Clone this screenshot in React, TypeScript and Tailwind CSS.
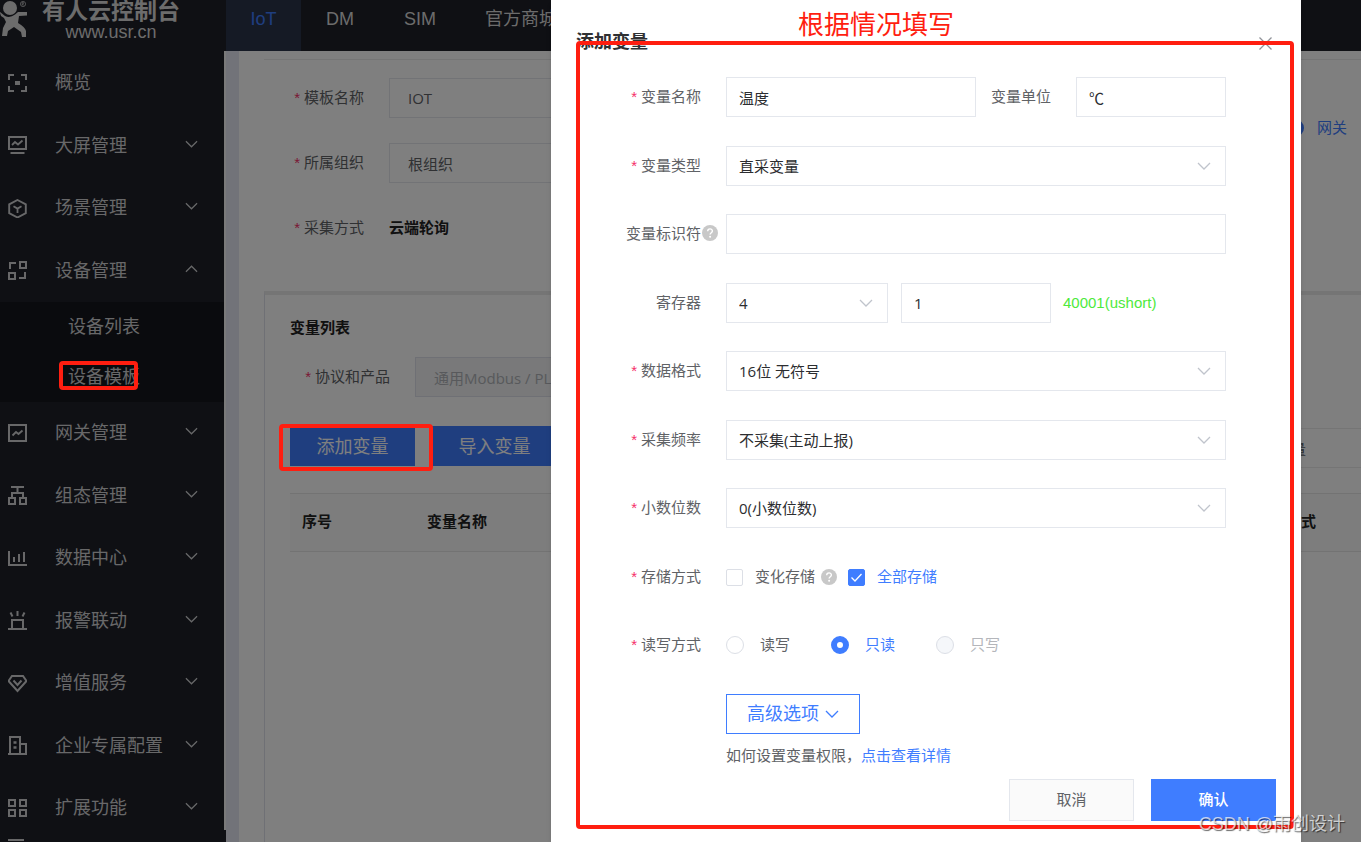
import React, { useState } from 'react';

interface MenuItem {
  label: string;
  icon: React.ReactNode;
  children?: string[];
  leaf?: boolean;
}

// Sidebar icons, all drawn on the same 19x19 grid
const menuItems: MenuItem[] = [
  {
    label: '概览',
    leaf: true,
    icon: (
      <>
        <path d="M1 6V1h5M13 1h5v5M18 12v5h-5M6 17H1v-5" />
        <rect x="7" y="7" width="5" height="4" fill="currentColor" stroke="none" />
      </>
    ),
  },
  {
    label: '大屏管理',
    icon: (
      <>
        <rect x="1" y="1" width="17" height="12" />
        <path d="M4 9l3-3 3 2.500 4.500-4" strokeWidth="1.8" />
        <path d="M2.500 17h14" />
      </>
    ),
  },
  {
    label: '场景管理',
    icon: (
      <>
        <path d="M9.500 1l8.300 4.300v8.900L9.500 18.500l-8.300-4.300V5.300z" strokeWidth="1.9" />
        <path d="M5.500 7.300l4 2.300 4-2.300M9.500 9.500v4.500" strokeWidth="1.8" />
      </>
    ),
  },
  {
    label: '设备管理',
    icon: (
      <>
        <path d="M2 8V2h6" />
        <rect x="12" y="1" width="6" height="6" />
        <rect x="1" y="12" width="6" height="6" />
        <path d="M17 11v6h-6" />
      </>
    ),
    children: ['设备列表', '设备模板'],
  },
  {
    label: '网关管理',
    icon: (
      <>
        <rect x="1" y="1" width="17" height="16" />
        <path d="M4.500 11.500l3.500-3.500 2.500 2 4-3.500" strokeWidth="1.8" />
      </>
    ),
  },
  {
    label: '组态管理',
    icon: (
      <>
        <path d="M3 1h13M9.500 1v6M4 11V7h11v4" />
        <rect x="1" y="12" width="6" height="6" />
        <rect x="12" y="12" width="6" height="6" />
      </>
    ),
  },
  {
    label: '数据中心',
    icon: (
      <>
        <path d="M1 2v14h18" />
        <path d="M6 13V8M11 13V5M16 13V3" />
      </>
    ),
  },
  {
    label: '报警联动',
    icon: (
      <>
        <path d="M4 17V9h11v8M0 18h19" />
        <path d="M9.500 0v5M2.500 1.500l2 4M16.500 1.500l-2 4" />
      </>
    ),
  },
  {
    label: '增值服务',
    icon: (
      <>
        <path d="M4 2h11l3.500 5-9 10-9-10z" />
        <path d="M5.500 6.500l4 4.500 4-4.500" />
      </>
    ),
  },
  {
    label: '企业专属配置',
    icon: (
      <>
        <path d="M2 18V1h10v17M12 8h6v10M0 18h19" />
        <path d="M5.500 6.500h3M5.500 11.500h3" strokeWidth="2.500" />
      </>
    ),
  },
  {
    label: '扩展功能',
    icon: (
      <>
        <rect x="1" y="1" width="6" height="6" />
        <rect x="12" y="1" width="6" height="6" />
        <rect x="1" y="11" width="6" height="6" />
        <rect x="12" y="11" width="6" height="6" />
      </>
    ),
  },
];

const Chevron: React.FC<{ className?: string; width?: number }> = ({ className = '', width = 14 }) => (
  <svg className={`shrink-0 ${className}`} width={width} height="8" viewBox="0 0 14 8" fill="none" stroke="currentColor" strokeWidth="1.3">
    <path d="M1 1l6 6 6-6" />
  </svg>
);

const HelpIcon: React.FC = () => (
  <svg width="16" height="16" viewBox="0 0 16 16" fill="none">
    <circle cx="8" cy="8" r="8" fill="#c8c8c8" />
    <path d="M5.700 6.200c0-3 4.700-3 4.700-.2 0 1.700-2.300 1.700-2.300 3.500" stroke="#fff" strokeWidth="1.400" />
    <circle cx="8.100" cy="11.800" r="1" fill="#fff" />
  </svg>
);

interface LabelProps {
  htmlFor?: string;
  required?: boolean;
  help?: boolean;
  className?: string;
  children: React.ReactNode;
}

const FieldLabel: React.FC<LabelProps> = ({ htmlFor, required, help, className = 'w-[150px]', children }) => (
  <label htmlFor={htmlFor} className={`relative shrink-0 pr-[25px] text-right text-[15px] text-[#606266] ${className}`}>
    {required && <span className="mr-1 text-[#f5306a]">*</span>}
    {children}
    {help && (
      <span className="absolute top-0.5 right-2">
        <HelpIcon />
      </span>
    )}
  </label>
);

const boxStyle =
  "h-10 w-full appearance-none border border-[#e4e7ed] bg-white px-3 text-[15px] text-[#2c2d30] outline-none font-['Open_Sans','Noto_Sans_CJK_SC',sans-serif]";

const SelectBox: React.FC<{ id: string; options: string[]; className?: string }> = ({ id, options, className = 'flex-1' }) => (
  <div className={`relative ${className}`}>
    <select id={id} className={boxStyle}>
      {options.map((option) => (
        <option key={option}>{option}</option>
      ))}
    </select>
    <Chevron className="pointer-events-none absolute top-4 right-[15px] text-[#c0c4cc]" />
  </div>
);

const Header: React.FC = () => (
  <header className="flex h-[51px] shrink-0 bg-[#1e2028] text-[#d8d8d8]">
    <div className="flex w-[226px] shrink-0">
      <svg className="shrink-0" width="42" height="40" viewBox="0 0 42 40" fill="currentColor">
        <ellipse cx="10" cy="8" rx="7" ry="7" />
        <path d="M0 12l5 4q5 2.500 10-1.500L18 12h9v3.500l-8 .5-1 7q7 4 8 8v6h-4l-1-5-7-5-6 4-1 5H2l1-8 3-6-2-4-3-2-1-3z" />
        <circle cx="23" cy="4" r="2.600" fill="none" stroke="currentColor" strokeWidth="0.700" />
        <path d="M22.200 5.500v-3h1.200v1.500h-1l1.400 1.500" fill="none" stroke="currentColor" strokeWidth="0.600" />
      </svg>
      <div className="flex flex-col items-center">
        <span className="text-[23px] leading-[22px] font-bold">有人云控制台</span>
        <span className="text-lg leading-5">www.usr.cn</span>
      </div>
    </div>
    <nav className="flex text-lg leading-[38px] whitespace-nowrap">
      <a href="#iot" className="w-[75px] bg-[#2a344a] text-center text-[#3f7dff]">IoT</a>
      <a href="#dm" className="px-[25px]">DM</a>
      <a href="#sim" className="px-[25px]">SIM</a>
      <a href="#mall" className="px-6">官方商城</a>
    </nav>
  </header>
);

const Sidebar: React.FC = () => (
  <aside className="flex w-[226px] shrink-0 flex-col bg-[#1e2028] text-lg text-[#d0d1d3]">
    <div className="min-h-0 flex-1 overflow-hidden border-r-2 border-[#f4f4f4] pt-px">
      <ul className="[&>li:nth-child(even)>a]:h-[63px] [&>li:nth-child(odd)>a]:h-[62px]">
        {menuItems.map((item) => (
          <li key={item.label}>
            <a href="#menu" className="flex items-center pr-[26px] pl-2">
              <svg className="mr-7 shrink-0" width="19" height="19" viewBox="0 0 19 19" fill="none" stroke="currentColor" strokeWidth="2">
                {item.icon}
              </svg>
              <span className="flex-1">{item.label}</span>
              {!item.leaf && <Chevron width={13} className={item.children ? 'mb-1 rotate-180' : 'mb-1'} />}
            </a>
            {item.children && (
              <ul className="bg-[#14161c] pl-[68px] leading-[50px]">
                {item.children.map((child) => (
                  <li key={child}>
                    <a href="#sub">{child}</a>
                  </li>
                ))}
              </ul>
            )}
          </li>
        ))}
      </ul>
    </div>
    <div className="flex h-3 shrink-0 items-end pb-px pl-2">
      <span className="h-0.5 w-4 bg-[#d0d1d3]" />
    </div>
  </aside>
);

const TemplatePage: React.FC = () => (
  <main className="flex min-w-0 flex-1 flex-col border-l-[13px] border-[#e4e6f2] bg-white pt-2 pl-[25px]">
    <section className="flex border-t border-[#ebebeb] pt-[18px] pb-[43px]">
      <div className="flex w-[600px] flex-col gap-[25px]">
        <div className="flex items-center">
          <FieldLabel htmlFor="tplName" required className="w-[125px]">模板名称</FieldLabel>
          <input id="tplName" className={`${boxStyle} pl-[18px] text-[#606266]`} defaultValue="IOT" />
        </div>
        <div className="flex items-center">
          <FieldLabel htmlFor="org" required className="w-[125px]">所属组织</FieldLabel>
          <input id="org" className={`${boxStyle} pl-[18px] text-[#606266]`} defaultValue="根组织" />
        </div>
        <div className="flex h-10 items-center">
          <FieldLabel required className="w-[125px]">采集方式</FieldLabel>
          <span className="text-[15px] font-bold text-[#222]">云端轮询</span>
        </div>
      </div>
      <label className="mt-[38px] mr-[14px] ml-auto flex h-6 items-center gap-[13px] text-[15px] text-[#3f7dff]">
        <input type="radio" name="deviceType" defaultChecked className="size-[18px] appearance-none rounded-full border-[6px] border-[#3f7dff] bg-white" />
        网关
      </label>
    </section>

    <section className="flex-1 border-t-4 border-l border-t-[#ebebeb] border-l-[#dfe1ea] pt-[21px] pl-[25px]">
      <h2 className="text-[15px] leading-6 font-bold text-[#222]">变量列表</h2>
      <div className="mt-[17px] flex items-center">
        <FieldLabel htmlFor="protocol" required className="w-[125px]">协议和产品</FieldLabel>
        <input
          id="protocol"
          disabled
          defaultValue="通用Modbus / PLC"
          className="h-10 w-[300px] border border-[#dfe1ea] bg-[#f2f2f4] px-[18px] font-['Open_Sans','Noto_Sans_CJK_SC',sans-serif] text-[15px] text-[#b0b2b8]"
        />
      </div>
      <div className="mt-[29px] flex items-start">
        <button type="button" className="mr-[17px] h-10 w-[125px] bg-[#3f7dff] pt-0.5 text-lg text-white">添加变量</button>
        <button type="button" className="h-10 w-[125px] bg-[#3f7dff] pt-0.5 text-lg text-white">导入变量</button>
        <input
          aria-label="搜索变量"
          defaultValue="搜索变量"
          className="mt-0.5 ml-auto h-10 w-[140px] border-y border-[#ebebeb] pr-[55px] text-right text-[15px] text-[#606266]"
        />
      </div>
      <table className="mt-[25px] w-full table-fixed text-left text-[15px] text-[#222]">
        <thead>
          <tr className="h-[58px] border-y border-[#e6e6e6] bg-[#fafafa]">
            <th className="w-[125px] pl-3">序号</th>
            <th className="pl-3">变量名称</th>
            <th className="pr-[45px] text-right">读写方式</th>
          </tr>
        </thead>
      </table>
    </section>
  </main>
);

interface StorageState {
  onChange: boolean;
  all: boolean;
}

const accessOptions = [
  { value: '读写', disabled: false },
  { value: '只读', disabled: false },
  { value: '只写', disabled: true },
];

const checkboxStyle =
  'size-[17px] appearance-none rounded-[2px] border border-[#dcdfe6] bg-white checked:border-[#3f7dff] checked:bg-[#3f7dff]';

const VariableDialog: React.FC = () => {
  const [storage, setStorage] = useState<StorageState>({ onChange: false, all: true });
  const [access, setAccess] = useState('只读');

  return (
    <form
      onSubmit={(e) => e.preventDefault()}
      className="relative min-h-full w-[750px] bg-white px-[25px] pt-[30px] text-[15px] text-[#606266] shadow-md"
    >
      <div className="mb-[23px] flex items-center justify-between">
        <h2 className="text-lg leading-6 font-bold text-[#303133]">添加变量</h2>
        <button type="button" aria-label="关闭" className="mt-0.5 mr-1 text-[#909399]">
          <svg width="13" height="13" viewBox="0 0 13 13" stroke="currentColor" strokeWidth="1.300">
            <path d="M0.500 0.500l12 12M12.500 0.500l-12 12" />
          </svg>
        </button>
      </div>

      <div className="pr-[50px] *:flex *:h-10 *:items-center *:odd:mb-[29px] *:even:mb-[28px]">
        <div>
          <FieldLabel htmlFor="varName" required>变量名称</FieldLabel>
          <input id="varName" className={`${boxStyle} flex-1`} defaultValue="温度" />
          <FieldLabel htmlFor="unit" className="w-[100px]">变量单位</FieldLabel>
          <div className="w-[150px] shrink-0">
            <input id="unit" className={boxStyle} defaultValue="℃" />
          </div>
        </div>
        <div>
          <FieldLabel htmlFor="varType" required>变量类型</FieldLabel>
          <SelectBox id="varType" options={['直采变量']} />
        </div>
        <div>
          <FieldLabel htmlFor="varKey" help>变量标识符</FieldLabel>
          <input id="varKey" className={boxStyle} />
        </div>
        <div>
          <FieldLabel htmlFor="register">寄存器</FieldLabel>
          <SelectBox id="register" options={['4', '3', '1', '0']} className="mr-[13px] w-[162px]" />
          <div className="mr-3 w-[150px]">
            <input aria-label="寄存器地址" className={boxStyle} defaultValue="1" />
          </div>
          <span className="text-[#4dea3c]">40001(ushort)</span>
        </div>
        <div>
          <FieldLabel htmlFor="format" required>数据格式</FieldLabel>
          <SelectBox id="format" options={['16位 无符号']} />
        </div>
        <div>
          <FieldLabel htmlFor="rate" required>采集频率</FieldLabel>
          <SelectBox id="rate" options={['不采集(主动上报)']} />
        </div>
        <div>
          <FieldLabel htmlFor="digits" required>小数位数</FieldLabel>
          <SelectBox id="digits" options={['0(小数位数)']} />
        </div>
        <div>
          <FieldLabel htmlFor="storeChange" required>存储方式</FieldLabel>
          <input
            id="storeChange"
            type="checkbox"
            checked={storage.onChange}
            onChange={(e) => setStorage((prev) => ({ ...prev, onChange: e.target.checked }))}
            className={checkboxStyle}
          />
          <label htmlFor="storeChange" className="mr-[6px] ml-3">变化存储</label>
          <HelpIcon />
          <span className="relative ml-[11px] flex">
            <input
              id="storeAll"
              type="checkbox"
              checked={storage.all}
              onChange={(e) => setStorage((prev) => ({ ...prev, all: e.target.checked }))}
              className={checkboxStyle}
            />
            <svg className="pointer-events-none absolute inset-0" width="17" height="17" viewBox="0 0 17 17" fill="none" stroke="#fff" strokeWidth="1.300">
              <path d="M3.500 8.500l3.500 3.500 6.500-7" />
            </svg>
          </span>
          <label htmlFor="storeAll" className="ml-3 text-[#3f7dff]">全部存储</label>
        </div>
        <div>
          <FieldLabel required>读写方式</FieldLabel>
          {accessOptions.map((option) => (
            <label
              key={option.value}
              className="mr-[41px] flex items-center gap-4 has-checked:text-[#3f7dff] has-disabled:text-[#b4b6bb]"
            >
              <input
                type="radio"
                name="access"
                disabled={option.disabled}
                checked={access === option.value}
                onChange={() => setAccess(option.value)}
                className="size-[18px] appearance-none rounded-full border border-[#dcdfe6] bg-white checked:border-[6px] checked:border-[#3f7dff] disabled:bg-[#f5f7fa]"
              />
              {option.value}
            </label>
          ))}
        </div>
      </div>

      <div className="pl-[150px]">
        <button type="button" className="flex h-10 w-[134px] items-center justify-center gap-1.5 border border-[#3f7dff] text-lg text-[#3f7dff]">
          高级选项
          <Chevron />
        </button>
        <p className="mt-2.5 leading-6">
          如何设置变量权限，
          <a href="#help" className="text-[#3f7dff]">点击查看详情</a>
        </p>
      </div>

      <div className="mt-[11px] flex justify-end gap-[17px]">
        <button type="button" className="h-[42px] w-[125px] border border-[#e4e7ed] bg-[#fafafa]">取消</button>
        <button type="submit" className="h-[42px] w-[125px] bg-[#3f7dff] font-medium text-white">确认</button>
      </div>

      {/* Red guide around the fields */}
      <span className="pointer-events-none absolute top-[9px] left-[247px] text-[26px] leading-8 text-[#ff1e10]">根据情况填写</span>
      <div className="pointer-events-none absolute top-[41px] right-[7px] bottom-[13px] left-[25px] rounded border-4 border-[#ff1e10]" />
    </form>
  );
};

const App: React.FC = () => (
  <div className="relative flex h-screen flex-col overflow-hidden bg-white font-['Liberation_Sans','Noto_Sans_CJK_SC',sans-serif]">
    <Header />
    <div className="flex min-h-0 flex-1">
      <Sidebar />
      <TemplatePage />
    </div>

    <div className="absolute inset-0 flex justify-end bg-black/50 pr-[60px]">
      <VariableDialog />
    </div>

    {/* Red guides over the page behind the dialog */}
    <div className="pointer-events-none absolute top-[361px] left-[59px] h-[29px] w-[79px] rounded border-4 border-[#ff1e10]" />
    <div className="pointer-events-none absolute top-[424px] left-[279px] h-[47px] w-[154px] rounded border-4 border-[#ff1e10]" />

    <span className="absolute right-4 bottom-1 text-lg leading-7 text-white/70 [text-shadow:1px_1px_1px_rgb(0_0_0/0.6)]">
      CSDN @雨创设计
    </span>
  </div>
);

export default App;
